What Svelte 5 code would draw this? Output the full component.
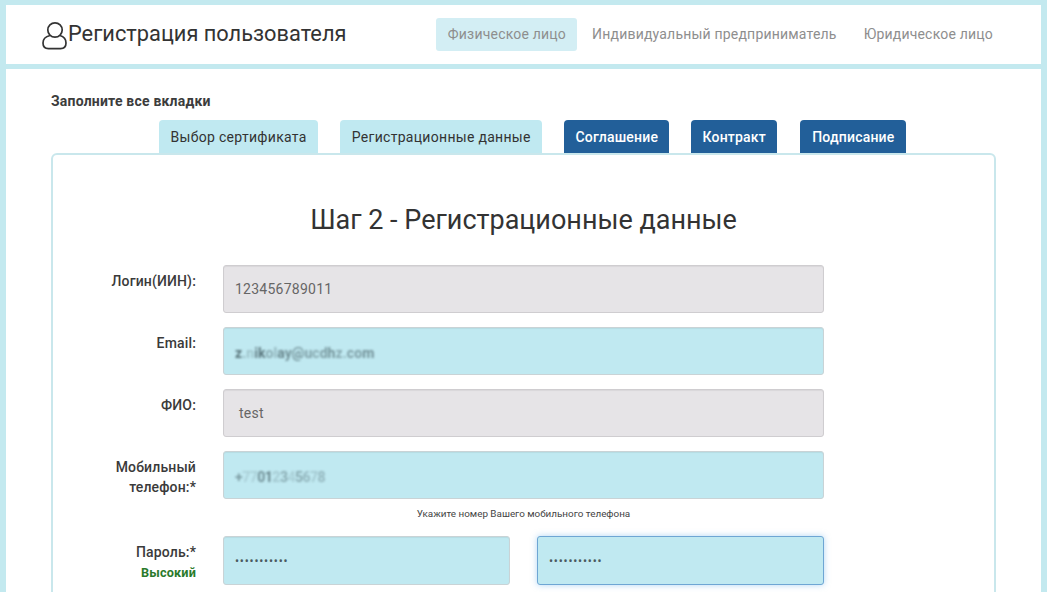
<script>
	const tabs = [
		{ title: 'Выбор сертификата', done: true },
		{ title: 'Регистрационные данные', done: true },
		{ title: 'Соглашение', done: false },
		{ title: 'Контракт', done: false },
		{ title: 'Подписание', done: false }
	];
	const navItems = ['Физическое лицо', 'Индивидуальный предприниматель', 'Юридическое лицо'];

	// the original blots these values out unevenly, so each char gets its own strength
	const emailChars = [...'z.nikolay@ucdhz.com'];
	const emailFade = [0.9, 0.4, 0.3, 0.8, 0.9, 0.5, 0.4, 0.8, 0.7, 0.7, 0.6, 0.5, 0.6, 0.7, 0.5, 0.4, 0.6, 0.6, 0.7];
	const phoneChars = [...'+77012345678'];
	const phoneFade = [0.6, 0.2, 0.2, 0.7, 0.8, 0.25, 0.5, 0.2, 0.5, 0.4, 0.25, 0.4];
</script>

<div class="page">
	<header class="topbar">
		<div class="brand">
			<svg class="user-icon" width="25" height="29" viewBox="0 0 25 29" fill="none" stroke="#333" stroke-width="1.7">
				<circle cx="13" cy="9" r="7.2" />
				<path d="M8 14.5 C3.5 15.5 1 18.5 1 22 C1 25.5 3 27.6 6.5 27.6 H18.5 C22 27.6 24 25.5 24 22 C24 18.5 21.5 15.5 18 14.5" />
			</svg>
			<h2>Регистрация пользователя</h2>
		</div>
		<nav>
			{#each navItems as item, i}
				<span class="nav-item" class:active={i === 0}>{item}</span>
			{/each}
		</nav>
	</header>

	<main>
		<p class="fill-note">Заполните все вкладки</p>
		<div class="tabs">
			{#each tabs as tab}
				<div class="tab" class:done={tab.done}>{tab.title}</div>
			{/each}
		</div>
		<section class="card">
			<h1>Шаг 2 - Регистрационные данные</h1>

			<div class="row">
				<div class="label">Логин(ИИН):</div>
				<div class="input locked">123456789011</div>
			</div>
			<div class="row">
				<div class="label">Email:</div>
				<div class="input">
					<span class="smudge">
						{#each emailChars as ch, i}<span style="opacity: {emailFade[i]}">{ch}</span>{/each}
					</span>
				</div>
			</div>
			<div class="row">
				<div class="label">ФИО:</div>
				<div class="input locked name">test</div>
			</div>
			<div class="row phone">
				<div class="label">Мобильный<br />телефон:*</div>
				<div class="input">
					<span class="smudge tight">
						{#each phoneChars as ch, i}<span style="opacity: {phoneFade[i]}">{ch}</span>{/each}
					</span>
				</div>
			</div>
			<div class="hint">Укажите номер Вашего мобильного телефона</div>
			<div class="row">
				<div class="label">Пароль:*<span class="strength">Высокий</span></div>
				<div class="pair">
					<div class="input"><span class="dots">•••••••••••</span></div>
					<div class="input focus"><span class="dots">•••••••••••</span></div>
				</div>
			</div>
		</section>
	</main>
</div>

<style>
	:global(html), :global(body) {
		margin: 0;
		height: 592px;
		overflow: hidden;
	}

	:global(body) {
		font-family: Roboto, 'Noto Sans', sans-serif;
		background: #c3e9ef;
		color: #333;
	}

	.page {
		padding: 5px 6px 0;
		display: flex;
		flex-direction: column;
		gap: 5px;
	}

	.topbar {
		background: #fff;
		height: 59px;
		display: flex;
		align-items: center;
		justify-content: space-between;
		padding: 0 37px 0 36px;
	}

	.brand {
		display: flex;
		align-items: center;
		gap: 1px;
	}

	.user-icon {
		margin-top: 2px;
	}

	h2 {
		margin: -2px 0 0;
		font-size: 21.8px;
		font-weight: 400;
		color: #333;
	}

	nav {
		display: flex;
		gap: 5px;
	}

	.nav-item {
		padding: 0 11px;
		height: 33px;
		line-height: 33px;
		font-size: 14px;
		letter-spacing: 0.2px;
		color: #8e8e8e;
		border-radius: 3px;
	}

	.nav-item.active {
		background: #d3eef4;
		padding-left: 12px;
		margin-right: -1px;
	}

	main {
		background: #fff;
		padding: 25px 45px 0;
		height: 530px;
	}

	.fill-note {
		margin: 0;
		font-size: 14px;
		font-weight: 700;
		letter-spacing: 0.2px;
		line-height: 15px;
		color: #3c3c3c;
	}

	.tabs {
		display: flex;
		gap: 22px;
		margin: 11px 0 0 108px;
	}

	.tab {
		height: 33px;
		line-height: 34px;
		padding: 0 11.2px;
		font-size: 14px;
		font-weight: 500;
		color: #fff;
		background: #225f99;
		border-radius: 4px 4px 0 0;
		letter-spacing: 0.2px;
	}

	.tab:last-child {
		margin-left: 1px;
		padding: 0 12px;
	}

	.tab.done {
		background: #c0e9f1;
		color: #333;
		font-weight: 400;
		padding: 0 11.5px;
		letter-spacing: 0.3px;
	}

	.card {
		border: 2px solid #c9e7ec;
		border-radius: 6px;
		padding: 47px 170px 0 0;
		height: 500px;
		box-sizing: border-box;
		width: 945px;
	}

	h1 {
		margin: 0 -170px 27px 0;
		text-align: center;
		font-size: 27px;
		line-height: 36px;
		font-weight: 400;
		color: #333;
	}

	.row {
		display: grid;
		grid-template-columns: 143px 1fr;
		column-gap: 27px;
		margin-bottom: 14px;
	}

	.phone {
		margin-bottom: 8px;
	}

	.label {
		text-align: right;
		font-size: 14px;
		font-weight: 500;
		letter-spacing: 0.15px;
		line-height: 20px;
		padding-top: 6px;
		color: #3a3a3a;
	}

	.strength {
		display: block;
		font-size: 12.7px;
		line-height: 22px;
		font-weight: 700;
		color: #2b7a2b;
	}

	.input {
		height: 48px;
		box-sizing: border-box;
		border: 1px solid #c9d3d6;
		border-radius: 3px;
		background: #c0e9f1;
		padding: 0 11px;
		line-height: 46px;
		font-size: 14px;
		color: #666;
		letter-spacing: 0.25px;
		box-shadow: inset 0 1px 1px rgba(0, 0, 0, 0.06);
	}

	.locked {
		background: #e6e4e7;
		border-color: #cfcdd0;
	}

	.name {
		padding-left: 15px;
	}

	.smudge {
		filter: blur(1px);
		color: #4f6a70;
		font-weight: 700;
		display: inline-block;
		margin-top: 2px;
		letter-spacing: 0.05px;
	}

	.smudge.tight {
		filter: blur(1.3px);
		letter-spacing: -0.5px;
	}

	.dots {
		color: #4a5a60;
		font-size: 12px;
		letter-spacing: 0.8px;
	}

	.hint {
		text-align: center;
		font-size: 9.9px;
		line-height: 14px;
		color: #444;
		margin: 0 0 15px 170px;
	}

	.pair {
		display: grid;
		grid-template-columns: 1fr 1fr;
		column-gap: 27px;
	}

	.pair .input {
		height: 49px;
	}

	.input.focus {
		border-color: #6ea6d4;
		box-shadow: 0 0 6px rgba(102, 175, 233, 0.5);
	}
</style>
